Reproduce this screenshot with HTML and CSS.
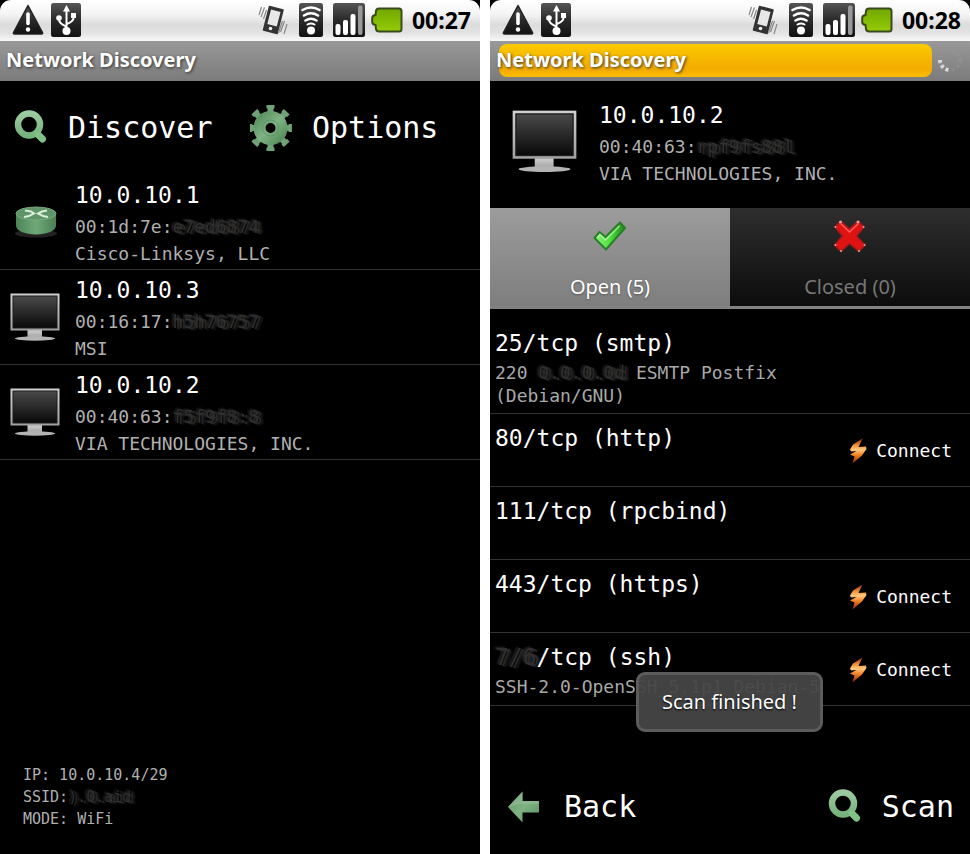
FILE: index.html
```
<!DOCTYPE html>
<html lang="en">
<head>
    <meta charset="UTF-8">
    <meta name="viewport" content="width=device-width, initial-scale=1.0">
    <title>Network Discovery</title>
    <link rel="stylesheet" href="styles.css">
</head>
<body>
    <!-- shared icons -->
    <svg class="defs" aria-hidden="true">
        <defs>
            <linearGradient id="dark" x1="0" y1="0" x2="0" y2="1">
                <stop offset="0" stop-color="#555"/>
                <stop offset="0.5" stop-color="#2a2a2a"/>
                <stop offset="1" stop-color="#111"/>
            </linearGradient>
            <linearGradient id="batt" x1="0" y1="0" x2="0" y2="1">
                <stop offset="0" stop-color="#71a800"/>
                <stop offset="1" stop-color="#94cb08"/>
            </linearGradient>
            <linearGradient id="green" x1="0" y1="0" x2="0" y2="1">
                <stop offset="0" stop-color="#9ccaa0"/>
                <stop offset="1" stop-color="#76b27c"/>
            </linearGradient>
            <linearGradient id="gearfill" x1="0" y1="0" x2="1" y2="1">
                <stop offset="0" stop-color="#5d9463"/>
                <stop offset="0.5" stop-color="#7fb284"/>
                <stop offset="1" stop-color="#5a9160"/>
            </linearGradient>
            <linearGradient id="side" x1="0" y1="0" x2="1" y2="0">
                <stop offset="0" stop-color="#4d8457"/>
                <stop offset="0.5" stop-color="#6fa878"/>
                <stop offset="1" stop-color="#4a7f53"/>
            </linearGradient>
            <linearGradient id="screen" x1="0" y1="0" x2="0" y2="1">
                <stop offset="0" stop-color="#4a4a4a"/>
                <stop offset="1" stop-color="#080808"/>
            </linearGradient>
            <linearGradient id="silver" x1="0" y1="0" x2="0" y2="1">
                <stop offset="0" stop-color="#d0d0d0"/>
                <stop offset="1" stop-color="#a0a0a0"/>
            </linearGradient>
            <linearGradient id="checkfill" x1="0" y1="0" x2="1" y2="0">
                <stop offset="0" stop-color="#8df27f"/>
                <stop offset="0.5" stop-color="#4fe03c"/>
                <stop offset="1" stop-color="#1c8a1c"/>
            </linearGradient>
            <linearGradient id="bolt" x1="0" y1="0" x2="0" y2="1">
                <stop offset="0" stop-color="#a02c10"/>
                <stop offset="0.3" stop-color="#f49a3c"/>
                <stop offset="0.45" stop-color="#ffc880"/>
                <stop offset="0.65" stop-color="#f58428"/>
                <stop offset="1" stop-color="#8c2008"/>
            </linearGradient>
        </defs>
        <symbol id="i-warning" viewBox="0 0 32 32">
            <path d="M16 1.500 30.500 28.500Q31 30 29.500 30H2.500Q1 30 1.500 28.500Z" fill="url(#dark)" stroke="#222" stroke-width="1.500" stroke-linejoin="round"/>
            <path d="M16 10V19.500" stroke="#fff" stroke-width="3.600" stroke-linecap="round"/>
            <circle cx="16" cy="25.500" r="2.200" fill="#fff"/>
        </symbol>
        <symbol id="i-usb" viewBox="0 0 30 34">
            <rect width="30" height="34" rx="2.500" fill="url(#dark)"/>
            <g stroke="#fff" fill="none" stroke-width="2">
                <path d="M15.500 28V6"/>
                <path d="M15.500 23.500Q8 20.500 8 16.500V14"/>
                <path d="M15.500 21Q22.500 18.500 22.500 15V12"/>
            </g>
            <circle cx="15.500" cy="28" r="4" fill="#fff"/>
            <circle cx="8" cy="15" r="2.800" fill="#fff"/>
            <rect x="20" y="10" width="5" height="5" fill="#fff"/>
            <path d="M15.500 2 19 8.500H12Z" fill="#fff"/>
        </symbol>
        <symbol id="i-vibrate" viewBox="0 0 30 32">
            <path d="M11.500 2.500 25 6 19 29.500 5.500 26Z" fill="#333" stroke="#333" stroke-width="1.500" stroke-linejoin="round"/>
            <path d="M13 5.500 22.500 8 18.800 22.500 9.300 20Z" fill="#e8e8e8"/>
            <circle cx="12.500" cy="24.500" r="1.800" fill="#eee"/>
            <g stroke="#8a8a8a" stroke-width="1.200" fill="none">
                <path d="M3.500 3 1 11M6.500 3.500 3 13M8.500 6 5.500 15M26.500 17 22.500 28M29 20 26 30M24.500 17 20.500 29"/>
            </g>
        </symbol>
        <symbol id="i-wifi" viewBox="0 0 24 34">
            <rect width="24" height="34" rx="2.500" fill="url(#dark)"/>
            <circle cx="12" cy="27.500" r="4" fill="#fff"/>
            <g stroke="#fff" stroke-width="2.600" fill="none" stroke-linecap="round">
                <path d="M3.500 7Q12 2 20.500 7"/>
                <path d="M5 12.500Q12 8 19 12.500"/>
                <path d="M6.500 17.500Q12 14 17.500 17.500"/>
                <path d="M8.500 21.500Q12 19.500 15.500 21.500" stroke-width="2"/>
            </g>
        </symbol>
        <symbol id="i-signal" viewBox="0 0 32 34">
            <rect width="32" height="34" rx="2.500" fill="url(#dark)"/>
            <rect x="2.500" y="21" width="5" height="11" rx="2" fill="#fff"/>
            <rect x="10" y="17" width="5" height="15" rx="2" fill="#fff"/>
            <rect x="17.500" y="11" width="5" height="21" rx="2" fill="#fff"/>
            <rect x="25" y="2.500" width="4.500" height="29.500" rx="2" fill="#999"/>
        </symbol>
        <symbol id="i-battery" viewBox="0 0 32 26">
            <path d="M8 1.500H28Q30.500 1.500 30.500 4V22Q30.500 24.500 28 24.500H8Q5.500 24.500 5 22L4.500 18Q1.200 17.500 1.200 15V11Q1.200 8.500 4.500 8L5 4Q5.500 1.500 8 1.500Z" fill="url(#batt)" stroke="#3a4a1c" stroke-width="2"/>
        </symbol>
        <symbol id="i-search" viewBox="0 0 40 40">
            <circle cx="19" cy="16.500" r="11" fill="none" stroke="url(#green)" stroke-width="6.500"/>
            <path d="M28 26.500 32.500 31" stroke="#82c088" stroke-width="7" stroke-linecap="round"/>
        </symbol>
        <symbol id="i-gear" viewBox="0 0 44 48">
            <g transform="translate(20.500 24)">
                <g fill="#6fa375">
                    <path id="tooth" d="M-3-15V-19L-4-20V-23H4V-20L3-19V-15Z"/>
                    <use href="#tooth" transform="rotate(45)"/>
                    <use href="#tooth" transform="scale(0.930 1) rotate(90)"/>
                    <use href="#tooth" transform="rotate(135)"/>
                    <use href="#tooth" transform="rotate(180)"/>
                    <use href="#tooth" transform="rotate(225)"/>
                    <use href="#tooth" transform="scale(0.930 1) rotate(270)"/>
                    <use href="#tooth" transform="rotate(315)"/>
                </g>
                <circle r="11" fill="none" stroke="url(#gearfill)" stroke-width="12"/>
                <circle r="8" fill="none" stroke="#568c5d" stroke-width="1" opacity="0.600"/>
            </g>
        </symbol>
        <symbol id="i-back" viewBox="0 0 40 40">
            <path d="M2 20 16.500 4.500V14H33V25.500H16.500V35.500Z" fill="url(#gearfill)"/>
            <path d="M2 20 16.500 4.500V14H33V17H14Z" fill="#9ac29d" opacity="0.500"/>
        </symbol>
        <symbol id="i-router" viewBox="0 0 50 50">
            <ellipse cx="26" cy="35.500" rx="21" ry="4" fill="#222"/>
            <path d="M6 16V27.500C6 33 15 36.500 26 36.500S46 33 46 27.500V16Z" fill="url(#side)"/>
            <ellipse cx="26" cy="15.500" rx="20" ry="6.500" fill="#5f9468" stroke="#79aa80" stroke-width="1"/>
            <path d="M15 12.500 21 13.500 24 15.500 19 18 14 19M37 12.500 32 13.500 28 15.500 33 18 38 19" fill="none" stroke="#d8eed8" stroke-width="2"/>
        </symbol>
        <symbol id="i-monitor" viewBox="0 0 50 50">
            <rect x="17.500" y="37" width="14.500" height="8" fill="url(#silver)"/>
            <ellipse cx="25" cy="45.500" rx="20" ry="2.200" fill="#b4b4b4"/>
            <rect x="0.500" y="0.500" width="49" height="37" fill="url(#silver)"/>
            <rect x="3" y="3" width="44" height="32" fill="url(#screen)" stroke="#1c1c1c" stroke-width="1"/>
        </symbol>
        <symbol id="i-check" viewBox="0 0 34 32">
            <path d="M1.500 17 6.500 11 12.500 16 27 1.500 32 7 13 28.500Z" fill="url(#checkfill)" stroke="#2c7d2a" stroke-width="2" stroke-linejoin="round"/>
            <path d="M4.500 16.500 7 13.500 12.500 19 26.500 5" fill="none" stroke="#c5f5bd" stroke-width="1.500" opacity="0.700"/>
        </symbol>
        <symbol id="i-cross" viewBox="0 0 34 34">
            <path d="M7.500 1 16.500 9 25 1 31 7 23.500 16 32 25 26 31.500 16.500 23.500 8 31.500 1.500 25 9.500 16 2 7Z" fill="#e01212" stroke="#a81a1a" stroke-width="1.500" stroke-linejoin="round"/>
            <path d="M8 4 16.500 12 25 4" fill="none" stroke="#ff5c5c" stroke-width="1.500"/>
            <g fill="#dca0a0">
                <circle cx="7.500" cy="2" r="1.500"/><circle cx="25" cy="2" r="1.500"/>
                <circle cx="2.500" cy="7" r="1"/><circle cx="30.500" cy="7" r="1"/>
                <circle cx="2.500" cy="25" r="1"/><circle cx="31.500" cy="25" r="1"/>
                <circle cx="8" cy="31" r="1"/><circle cx="26" cy="31" r="1"/>
            </g>
        </symbol>
        <symbol id="i-bolt" viewBox="0 0 20 26">
            <path d="M14.500 0.500 5 6.500 2 11.500 3 13.500 8.500 13 2 16.500 6.500 18.500 4.500 25.500 14 17.500 18.500 11 18 8.500 10.500 9Z" fill="url(#bolt)"/>
        </symbol>
        <symbol id="i-spinner" viewBox="0 0 30 30">
            <g stroke-width="4" stroke-dasharray="3 2.500" fill="none">
                <circle cx="15" cy="15" r="10" stroke="#969696" opacity="0.500"/>
                <path d="M5 15A10 10 0 0 0 15 25" stroke="#d8d8d8"/>
            </g>
        </symbol>
    </svg>

    <div class="phone">
        <div class="statusbar">
            <svg class="s-warning"><use href="#i-warning"/></svg>
            <svg class="s-usb"><use href="#i-usb"/></svg>
            <svg class="s-vibrate"><use href="#i-vibrate"/></svg>
            <svg class="s-wifi"><use href="#i-wifi"/></svg>
            <svg class="s-signal"><use href="#i-signal"/></svg>
            <svg class="s-battery"><use href="#i-battery"/></svg>
            <span class="clock">00:27</span>
        </div>
        <div class="titlebar">
            <h1>Network Discovery</h1>
        </div>
        <div class="actions">
            <button class="btn"><svg><use href="#i-search"/></svg>Discover</button>
            <button class="btn"><svg class="gear"><use href="#i-gear"/></svg>Options</button>
        </div>
        <ul class="hosts">
            <li class="host">
                <svg><use href="#i-router"/></svg>
                <div>
                    <h2>10.0.10.1</h2>
                    <p>00:1d:7e:<span class="smudge">e7ed6874</span></p>
                    <p>Cisco-Linksys, LLC</p>
                </div>
            </li>
            <li class="host">
                <svg><use href="#i-monitor"/></svg>
                <div>
                    <h2>10.0.10.3</h2>
                    <p>00:16:17:<span class="smudge">h5h76757</span></p>
                    <p>MSI</p>
                </div>
            </li>
            <li class="host">
                <svg><use href="#i-monitor"/></svg>
                <div>
                    <h2>10.0.10.2</h2>
                    <p>00:40:63:<span class="smudge">f5f9f8:8</span></p>
                    <p>VIA TECHNOLOGIES, INC.</p>
                </div>
            </li>
        </ul>
        <div class="info">
            <p>IP: 10.0.10.4/29</p>
            <p>SSID:<span class="smudge">).0.aid</span></p>
            <p>MODE: WiFi</p>
        </div>
    </div>

    <div class="phone">
        <div class="statusbar">
            <svg class="s-warning"><use href="#i-warning"/></svg>
            <svg class="s-usb"><use href="#i-usb"/></svg>
            <svg class="s-vibrate"><use href="#i-vibrate"/></svg>
            <svg class="s-wifi"><use href="#i-wifi"/></svg>
            <svg class="s-signal"><use href="#i-signal"/></svg>
            <svg class="s-battery"><use href="#i-battery"/></svg>
            <span class="clock">00:28</span>
        </div>
        <div class="titlebar">
            <div class="progress"></div>
            <h1>Network Discovery</h1>
            <svg class="spinner"><use href="#i-spinner"/></svg>
        </div>
        <div class="host host-head">
            <svg><use href="#i-monitor"/></svg>
            <div>
                <h2>10.0.10.2</h2>
                <p>00:40:63:<span class="smudge">rpf9fs88l</span></p>
                <p>VIA TECHNOLOGIES, INC.</p>
            </div>
        </div>
        <div class="tabs">
            <button class="tab active"><svg><use href="#i-check"/></svg>Open (5)</button>
            <button class="tab"><svg><use href="#i-cross"/></svg>Closed (0)</button>
        </div>
        <ul class="ports">
            <li class="port">
                <div>
                    <h2>25/tcp (smtp)</h2>
                    <p>220 <span class="smudge">0.0.0.0d</span> ESMTP Postfix<br>(Debian/GNU)</p>
                </div>
            </li>
            <li class="port">
                <div><h2>80/tcp (http)</h2></div>
                <button class="connect"><svg><use href="#i-bolt"/></svg>Connect</button>
            </li>
            <li class="port">
                <div><h2>111/tcp (rpcbind)</h2></div>
            </li>
            <li class="port">
                <div><h2>443/tcp (https)</h2></div>
                <button class="connect"><svg><use href="#i-bolt"/></svg>Connect</button>
            </li>
            <li class="port">
                <div>
                    <h2><span class="smudge">7/6</span>/tcp (ssh)</h2>
                    <p class="nowrap">SSH-2.0-OpenSSH_5.1p1 Debian-5</p>
                </div>
                <button class="connect"><svg><use href="#i-bolt"/></svg>Connect</button>
            </li>
        </ul>
        <div class="bottom">
            <button class="btn"><svg><use href="#i-back"/></svg>Back</button>
            <button class="btn"><svg><use href="#i-search"/></svg>Scan</button>
        </div>
        <div class="toast">Scan finished !</div>
    </div>
</body>
</html>
```
FILE: styles.css
```
* {
    box-sizing: border-box;
}
body {
    margin: 0;
    display: flex;
    gap: 10px;
    min-height: 100vh;
    background-color: #fff;
    color: #fff;
    font-family: "DejaVu Sans Mono", monospace;
}
h1, h2, p, ul {
    margin: 0;
    padding: 0;
    font-weight: normal;
    list-style: none;
}
button {
    padding: 0;
    border: none;
    background: none;
    color: inherit;
    font-family: inherit;
    cursor: pointer;
}
svg {
    flex: none;
}
.defs {
    position: absolute;
    width: 0;
    height: 0;
}
.phone {
    position: relative;
    flex: 1;
    min-width: 0;
    display: flex;
    flex-direction: column;
    background-color: #000;
}

/* status bar */
.statusbar {
    display: flex;
    align-items: center;
    height: 41px;
    padding: 0 9px 2px 12px;
    border-radius: 11px 11px 0 0;
    background: linear-gradient(#fff, #f4f4f4 35%, #dcdcdc 60%, #e2e2e2 80%, #f8f8f8);
}
.s-warning {
    width: 32px;
    height: 32px;
}
.s-usb {
    width: 30px;
    height: 34px;
    margin-left: 7px;
}
.s-vibrate {
    width: 30px;
    height: 32px;
    margin-left: auto;
}
.s-wifi {
    width: 24px;
    height: 34px;
    margin-left: 11px;
}
.s-signal {
    width: 32px;
    height: 34px;
    margin-left: 10px;
}
.s-battery {
    width: 32px;
    height: 26px;
    margin: 0 9px 0 6px;
}
.clock {
    color: #000;
    font: bold 23px/38px "Noto Sans", sans-serif;
}

/* title bar */
.titlebar {
    position: relative;
    display: flex;
    align-items: center;
    justify-content: space-between;
    height: 40px;
    padding: 0 5px 2px 6px;
    background: linear-gradient(#999, #7b7b7b);
}
.titlebar h1 {
    position: relative;
    font: bold 20px/38px "Noto Sans", sans-serif;
    text-shadow: 1px 1px 3px #333;
}
.progress {
    position: absolute;
    inset: 3px 38px 4px 9px;
    border-radius: 8px;
    background: linear-gradient(#fbca00, #f3ab00 75%, #fabd00);
}
.spinner {
    width: 30px;
    height: 30px;
}

/* big buttons */
.btn {
    display: flex;
    align-items: center;
    gap: 18px;
    font-size: 30px;
    line-height: 40px;
}
.btn svg {
    width: 40px;
    height: 40px;
}
.btn .gear {
    width: 44px;
    height: 48px;
}
.actions {
    display: grid;
    grid-template-columns: 1fr 1fr;
    height: 94px;
}
.actions .btn {
    padding-left: 10px;
}
.bottom {
    display: flex;
    justify-content: space-between;
    height: 94px;
    margin-top: auto;
    padding: 0 16px;
}

/* hosts */
.host {
    display: flex;
    align-items: center;
    gap: 15px;
    padding: 3px 0 2px 10px;
    border-bottom: 1px solid #333;
}
.host svg {
    width: 50px;
    height: 50px;
}
h2 {
    font-size: 23px;
    line-height: 35px;
}
.host p {
    color: #b0b0b0;
    font-size: 18px;
    line-height: 27px;
}
.host-head {
    gap: 22px;
    padding: 17px 0 21px 22px;
    border-bottom: none;
}
.host-head svg {
    width: 65px;
    height: 65px;
}

/* wiped out characters */
.smudge {
    color: #303030;
    text-shadow: 3px 1px 1px #2c2c2c, -2px -1px 2px #262626, 5px 2px 2px #1c1c1c;
}
.info {
    margin-top: auto;
    padding: 0 0 24px 23px;
    color: #b0b0b0;
    font-size: 15px;
    line-height: 22px;
}

/* tabs */
.tabs {
    display: grid;
    grid-template-columns: 1fr 1fr;
    border-bottom: 3px solid #828282;
}
.tab {
    display: flex;
    flex-direction: column;
    align-items: center;
    justify-content: space-between;
    height: 98px;
    padding: 12px 0 4px;
    background: linear-gradient(#2e2e2e, #0c0c0c);
    color: #777;
    font: 20px/30px "Noto Sans", sans-serif;
}
.tab.active {
    background: linear-gradient(#9c9c9c, #7e7e7e);
    color: #fff;
    text-shadow: 0 1px 2px #555;
}
.tab svg {
    width: 34px;
    height: 34px;
}

/* ports */
.ports {
    padding-top: 10px;
}
.port {
    display: flex;
    justify-content: space-between;
    min-height: 73px;
    padding: 7px 18px 6px 5px;
    border-bottom: 1px solid #333;
}
.port > div {
    flex: 1;
    min-width: 0;
}
.port p {
    color: #a8a8a8;
    font-size: 18px;
    line-height: 23px;
}
.port .nowrap {
    white-space: nowrap;
}
.connect {
    display: flex;
    align-items: center;
    gap: 8px;
    font-size: 18px;
}
.connect svg {
    width: 20px;
    height: 26px;
}
.toast {
    position: absolute;
    right: 147px;
    bottom: 122px;
    padding: 12px 23px;
    border: 3px solid #5c5c5c;
    border-radius: 9px;
    background-color: rgba(70, 70, 70, 0.95);
    font: 20px/30px "Noto Sans", sans-serif;
    text-shadow: 0 1px 2px #000;
}
```
